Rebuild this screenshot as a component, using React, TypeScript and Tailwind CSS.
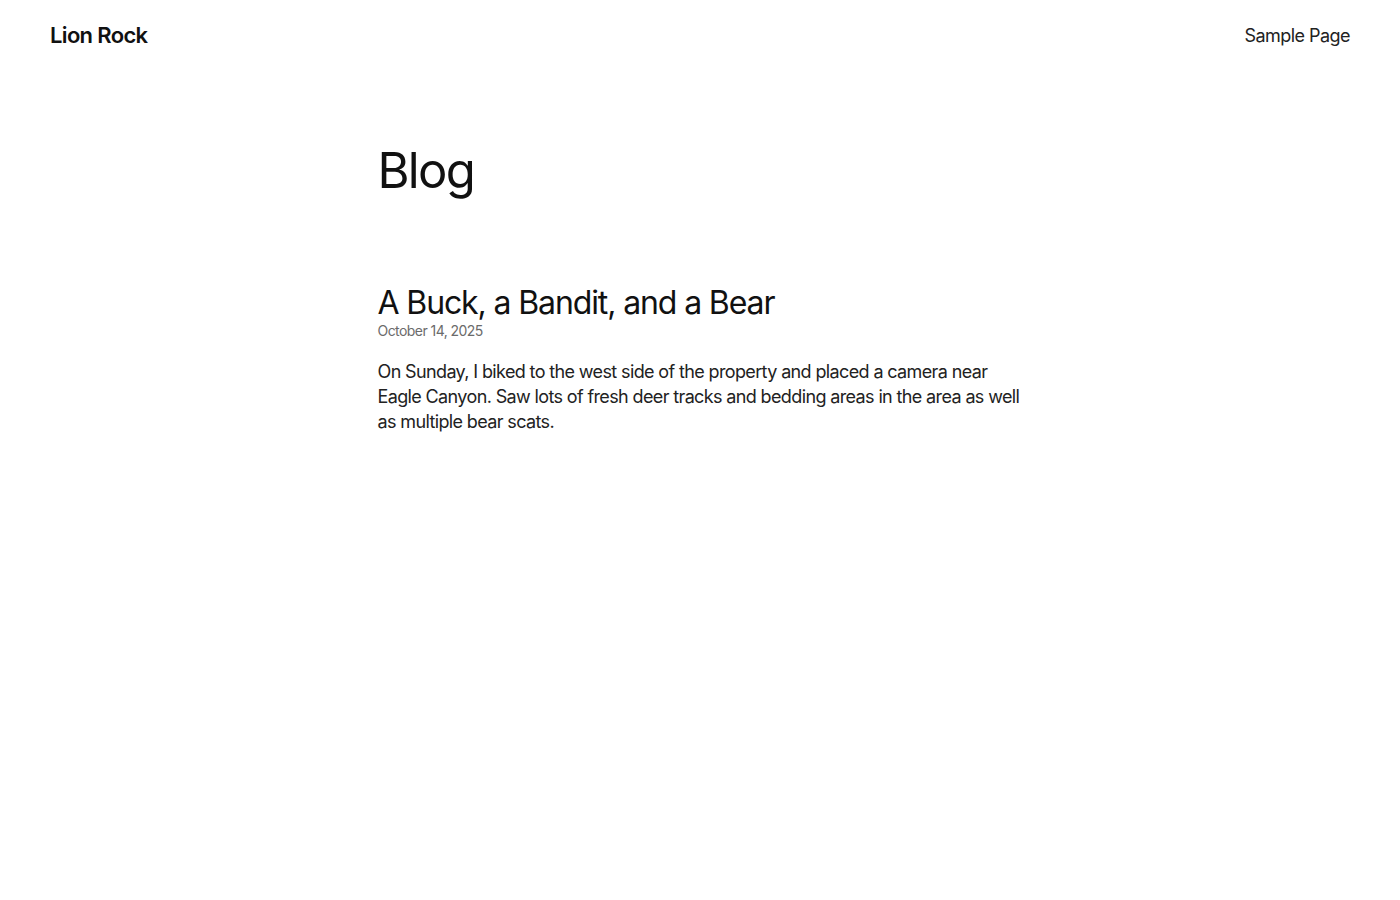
export default function App() {
  return (
    <div
      className="min-h-screen bg-white text-[#111111]"
      style={{ fontFamily: "Inter, 'Noto Sans', sans-serif" }}
    >
      <header className="flex items-center justify-between h-[70px] px-[50px]">
        <a className="text-[22px] font-semibold tracking-[-0.03em]">Lion Rock</a>
        <nav className="text-[18px] tracking-[-0.03em] text-[#222]">
          <a>Sample Page</a>
        </nav>
      </header>

      <main className="w-[645px] mx-auto pt-[72px]">
        <h1 className="text-[49px] font-normal leading-[1.2] tracking-[-0.035em]">
          Blog
        </h1>

        <article className="mt-[83px]">
          <h2 className="text-[32px] leading-[1.2] tracking-[-0.035em]">
            A Buck, a Bandit, and a Bear
          </h2>
          <div className="text-[14px] text-[#6b6b6b] tracking-[-0.04em] leading-[1.2] mt-[1px]">
            October 14, 2025
          </div>
          <p className="mt-[19px] text-[18px] leading-[25px] tracking-[-0.035em] text-[#222]">
            On Sunday, I biked to the west side of the property and placed a camera near
            Eagle Canyon. Saw lots of fresh deer tracks and bedding areas in the area as well
            as multiple bear scats.
          </p>
        </article>
      </main>
    </div>
  );
}
